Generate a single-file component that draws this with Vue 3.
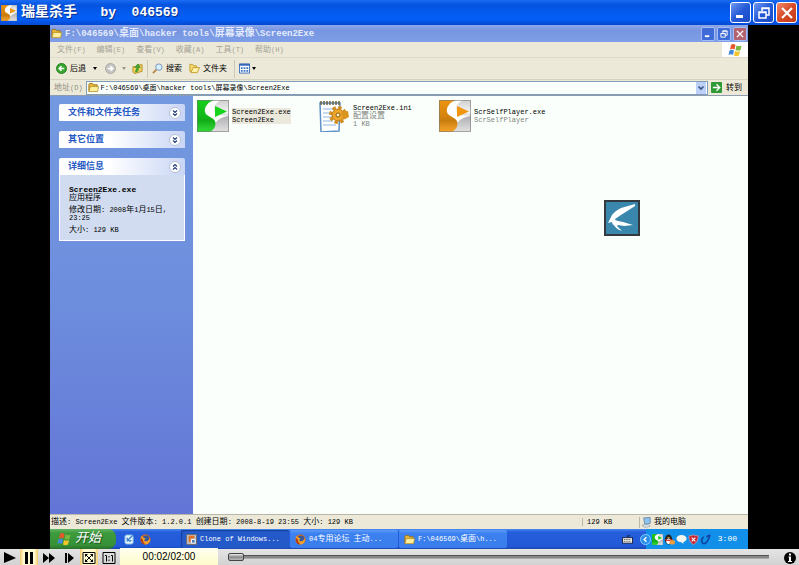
<script setup>
    import { ref, h } from 'vue';

    // latin and chinese runs get their own size, see .mix below
    const Mix = (props) => h('span', { class: 'mix' },
        props.t.split(/([\x20-\x7e]+)/).filter((s) => s !== '').map((s) =>
            /^[\x20-\x7e]/.test(s) ? h('span', { class: 'latin' }, s) : s
        )
    );
    Mix.props = ['t'];

    const path = ref('F:\\046569\\桌面\\hacker tools\\屏幕录像\\Screen2Exe');
    const position = ref(0);

    const menus = ['文件(F)', '编辑(E)', '查看(V)', '收藏(A)', '工具(T)', '帮助(H)'];

    const panels = ref([
        { title: '文件和文件夹任务', open: false },
        { title: '其它位置', open: false },
        { title: '详细信息', open: true },
    ]);

    const files = [
        { name: 'Screen2Exe.exe', lines: ['Screen2Exe'], icon: 'logo', tone: 'green', selected: true },
        { name: 'Screen2Exe.ini', lines: ['配置设置', '1 KB'], icon: 'ini', tone: '' },
        { name: 'ScrSelfPlayer.exe', lines: ['ScrSelfPlayer'], icon: 'logo', tone: 'orange' },
    ];

    const tasks = [
        { title: 'Clone of Windows...', icon: 'vm', active: true },
        { title: '04专用论坛 主动...', icon: 'fox' },
        { title: 'F:\\046569\\桌面\\h...', icon: 'folder' },
    ];
</script>

<template>
    <svg class="defs" aria-hidden="true">
        <defs>
            <linearGradient id="silver" x1="0" y1="0" x2="0" y2="1">
                <stop offset="0" stop-color="#cfcfcf" /><stop offset=".4" stop-color="#f6f6f6" />
                <stop offset=".55" stop-color="#b4b4b8" /><stop offset="1" stop-color="#e2e2e2" />
            </linearGradient>
            <linearGradient id="shade" x1="0" y1="0" x2="0" y2="1">
                <stop offset="0" stop-color="#000" stop-opacity=".02" /><stop offset=".5" stop-color="#000" stop-opacity=".12" />
                <stop offset=".65" stop-color="#000" stop-opacity=".18" /><stop offset="1" stop-color="#fff" stop-opacity=".1" />
            </linearGradient>
        </defs>
        <symbol id="logo" viewBox="0 0 32 32">
            <rect width="32" height="32" fill="url(#silver)" />
            <path d="M15 0H24C18 3 16 8 17 12C18 15 24 16 32 15C25 18 20 19 18 24L5 14C5 6 9 2 15 0Z" fill="#fff" />
            <path d="M0 0H17C11 2 7 7 8 12C9 17 18 17 18.500 23Q18.500 29 13 32H0Z" fill="currentColor" />
            <path d="M0 0H17C11 2 7 7 8 12C9 17 18 17 18.500 23Q18.500 29 13 32H0Z" fill="url(#shade)" />
            <path d="M18 6L30 11.500L18 17Z" fill="currentColor" />
            <path d="M.5 .5H31.500V31.500H.5Z" fill="none" stroke="#777" stroke-opacity=".6" />
        </symbol>
        <symbol id="ini" viewBox="0 0 32 32">
            <path d="M2 3H22L21 31L3 32Z" fill="#fff" stroke="#5e91c7" stroke-width="1.500" />
            <path d="M5 9H18M5 13H17M5 17H14M5 21H15M5 25H18" stroke="#8eb4de" />
            <path d="M3 1V5M6 1V5M9 1V5M12 1V5M15 1V5M18 1V5M21 1V5" stroke="#6f6240" stroke-width="1.500" />
            <circle cx="20" cy="15" r="6" fill="#eda52a" stroke="#b87411" />
            <circle cx="20" cy="15" r="7.500" fill="none" stroke="#d18e20" stroke-width="3" stroke-dasharray="3.500 2.390" />
            <path d="M23 12L30 11L31 17L25 20Z" fill="#d9951f" />
            <circle cx="20" cy="15" r="2" fill="#fff1c4" stroke="#8f5a10" />
        </symbol>
        <symbol id="folder" viewBox="0 0 12 12">
            <path d="M1 2.500L2 1.500H5L6 3H10V10H1Z" fill="#e5b73b" stroke="#9c7417" />
            <path d="M1 10.500L2.500 5H11.500L10.500 10.500Z" fill="#fff0a0" stroke="#b48a21" stroke-width=".8" />
        </symbol>
        <symbol id="fox" viewBox="0 0 12 12">
            <circle cx="6" cy="6" r="5.500" fill="#e06a12" />
            <circle cx="6.500" cy="5" r="3.500" fill="#35579c" />
            <path d="M1 2Q2 4 4 4L6 5Q4 6 5 8Q8 9 11 5Q11 11 6 11.500Q0 11 1 2Z" fill="#f6a32b" />
            <path d="M1 4Q0 11 6 11.500Q3 9 3 6Z" fill="#b43a10" />
        </symbol>
        <symbol id="vm" viewBox="0 0 12 12">
            <rect x=".5" y=".5" width="11" height="11" rx="1" fill="#b9bec6" stroke="#75685e" />
            <path d="M3 2H9V5H5V9H3Z" fill="#e8711d" />
            <path d="M6 6H10V10H6Z" fill="#4d7cb3" stroke="#fff" />
        </symbol>
        <symbol id="flag" viewBox="0 0 14 14">
            <path d="M3 2Q5 0 7.500 2L6.500 6.500Q4 5 2 6.500Z" fill="#e8572a" />
            <path d="M8.500 2.500Q11 4 13.500 2.500L12.500 7Q10 8 7.500 7Z" fill="#79b83d" />
            <path d="M1.500 7.500Q4 6 6 7.500L5 12Q3 10.500 .5 12Z" fill="#4488dc" />
            <path d="M7 8Q9.500 9.500 12 8L11 12.500Q8 14 6 12.500Z" fill="#f5c52b" />
        </symbol>
        <symbol id="min" viewBox="0 0 16 16"><path d="M3 10H10V13H3Z" fill="currentColor" /></symbol>
        <symbol id="restore" viewBox="0 0 16 16">
            <path d="M6 6V3H13V10H10M6 3.500H13M3 7H10V13H3ZM3 7.500H10" fill="none" stroke="currentColor" stroke-width="1.500" />
        </symbol>
        <symbol id="close" viewBox="0 0 16 16">
            <path d="M3 3L13 13M13 3L3 13" stroke="currentColor" stroke-width="2.200" />
        </symbol>
    </svg>

    <div class="player">
        <header class="top">
            <svg class="top-logo orange"><use href="#logo" /></svg>
            <h1><Mix t="瑞星杀手" /><Mix t="   by  046569" /></h1>
            <div class="winbtns big">
                <button aria-label="最小化"><svg><use href="#min" /></svg></button>
                <button aria-label="还原"><svg><use href="#restore" /></svg></button>
                <button class="red" aria-label="关闭"><svg><use href="#close" /></svg></button>
            </div>
        </header>

        <main class="stage">
            <div class="screen">
                <div class="wintitle">
                    <svg class="i12"><use href="#folder" /></svg>
                    <Mix :t="path" />
                    <div class="winbtns small">
                        <button aria-label="最小化"><svg><use href="#min" /></svg></button>
                        <button aria-label="还原"><svg><use href="#restore" /></svg></button>
                        <button class="red" aria-label="关闭"><svg><use href="#close" /></svg></button>
                    </div>
                </div>

                <nav class="menu">
                    <button v-for="m in menus" :key="m"><Mix :t="m" /></button>
                    <div class="flagbox"><svg><use href="#flag" /></svg></div>
                </nav>

                <div class="tools">
                    <button class="back">
                        <svg class="i12" viewBox="0 0 12 12"><circle cx="6" cy="6" r="5.500" fill="#37a62f" stroke="#247b20" /><path d="M9 6H4M6 3.500L3.500 6L6 8.500" fill="none" stroke="#fff" stroke-width="1.700" /></svg>
                        后退
                    </button>
                    <button class="drop" aria-label="后退列表"><svg class="tri" viewBox="0 0 4 3"><path d="M0 0H4L2 3Z" /></svg></button>
                    <button aria-label="前进">
                        <svg class="i12" viewBox="0 0 12 12"><circle cx="6" cy="6" r="5.500" fill="#c4c4c0" stroke="#a6a6a2" /><path d="M3 6H8M6 3.500L8.500 6L6 8.500" fill="none" stroke="#fff" stroke-width="1.700" /></svg>
                    </button>
                    <button class="drop pale" aria-label="前进列表"><svg class="tri" viewBox="0 0 4 3"><path d="M0 0H4L2 3Z" /></svg></button>
                    <button aria-label="向上">
                        <svg class="i12" viewBox="0 0 12 12"><path d="M1 4H5L6 2H11V9L3 11.500L1 10Z" fill="#f3d564" stroke="#b08a20" /><path d="M4 10Q8 9 6.500 5H9L6.500 1L3 5H5Q6 7 4 8Z" fill="#3fae33" stroke="#23781b" stroke-width=".6" /></svg>
                    </button>
                    <i class="sep"></i>
                    <button>
                        <svg class="i12" viewBox="0 0 12 12"><path d="M1 11L5 7" stroke="#b98a4e" stroke-width="2" /><circle cx="7.500" cy="4.500" r="3.500" fill="#d7efff" stroke="#7292b8" /></svg>
                        搜索
                    </button>
                    <button class="folders">
                        <svg class="i12" viewBox="0 0 12 12"><path d="M1 1.500H4L5 3H8V9H1Z" fill="#f6dc70" stroke="#c29a2b" /><path d="M2 10.500L4.500 5H11.500L9 10.500Z" fill="#fff2a6" stroke="#c29a2b" /></svg>
                        文件夹
                    </button>
                    <i class="sep"></i>
                    <button class="views" aria-label="查看">
                        <svg class="i12" viewBox="0 0 12 12"><path d="M.5 1H11.500V11H.5Z" fill="#fff" stroke="#3568b8" /><path d="M0 2H12" stroke="#3568b8" stroke-width="2" /><path d="M2 5.500H10M2 8.500H10" stroke="#3d73c4" stroke-width="2" stroke-dasharray="2 1" /></svg>
                        <svg class="tri" viewBox="0 0 4 3"><path d="M0 0H4L2 3Z" /></svg>
                    </button>
                </div>

                <div class="address">
                    <label for="addr"><Mix t="地址(D)" /></label>
                    <div class="field">
                        <svg class="i12"><use href="#folder" /></svg>
                        <input id="addr" type="text" v-model="path" spellcheck="false">
                        <button aria-label="展开"><svg viewBox="0 0 8 8"><path d="M1.500 2.500L4 5L6.500 2.500" fill="none" stroke="#3b5789" stroke-width="1.700" /></svg></button>
                    </div>
                    <button class="go">
                        <svg class="i12" viewBox="0 0 12 12"><rect width="12" height="12" rx="1" fill="#2f9a35" /><path d="M2 6H9M6 2.500L9.500 6L6 9.500" fill="none" stroke="#fff" stroke-width="1.500" /></svg>
                        转到
                    </button>
                </div>

                <div class="body">
                    <aside>
                        <section v-for="p in panels" :key="p.title">
                            <button class="head" :aria-expanded="p.open" @click="p.open = !p.open">
                                {{ p.title }}
                                <svg viewBox="0 0 12 12">
                                    <circle cx="6" cy="6" r="5.500" fill="#fff" stroke="#b5bdd3" />
                                    <path :d="p.open ? 'M4 5.500L6 3.500L8 5.500M4 8.500L6 6.500L8 8.500' : 'M4 3.500L6 5.500L8 3.500M4 6.500L6 8.500L8 6.500'" fill="none" stroke="#26407d" stroke-width="1.200" />
                                </svg>
                            </button>
                            <div v-if="p.open" class="details">
                                <strong>Screen2Exe.exe</strong>
                                <p>应用程序</p>
                                <p class="gap"><Mix t="修改日期: 2008年1月15日," /></p>
                                <p><Mix t="23:25" /></p>
                                <p class="gap"><Mix t="大小: 129 KB" /></p>
                            </div>
                        </section>
                    </aside>

                    <div class="files">
                        <div v-for="f in files" :key="f.name" class="file" :class="{ selected: f.selected }">
                            <svg :class="f.tone"><use :href="'#' + f.icon" /></svg>
                            <div class="label">
                                <p class="name"><Mix :t="f.name" /></p>
                                <p v-for="l in f.lines" :key="l"><Mix :t="l" /></p>
                            </div>
                        </div>
                        <svg class="pet" viewBox="0 0 36 36">
                            <rect x="1" y="1" width="34" height="34" fill="#3987ad" stroke="#35383d" stroke-width="2" />
                            <path d="M31 4L17 8Q9 12 7 17L4 23L8 22L9 25L12 22L11 19L17 15L31 6Z" fill="#fff" />
                            <path d="M8 22Q11 19 14 21L19 22L29 25L20 26L14 25L13 26L18 31Q11 29 8 22Z" fill="#fff" />
                        </svg>
                    </div>
                </div>

                <div class="status">
                    <Mix class="desc" t="描述: Screen2Exe 文件版本: 1.2.0.1 创建日期: 2008-8-19 23:55 大小: 129 KB" />
                    <Mix class="size" t="129 KB" />
                    <span class="place">
                        <svg class="i12" viewBox="0 0 12 12"><path d="M3 1L10 .5V7L4 8Z" fill="#88c5f5" stroke="#7688a0" /><path d="M1 9L8 8L10 10L4 11.500Z" fill="#dfe3e6" stroke="#8e98a5" stroke-width=".7" /></svg>
                        我的电脑
                    </span>
                </div>

                <div class="taskbar">
                    <button class="start"><svg><use href="#flag" /></svg>开始</button>
                    <div class="quick">
                        <svg class="i12" viewBox="0 0 12 12"><rect x="1" y="1" width="9" height="10" rx="2" fill="#e6f3fb" stroke="#76b4e5" /><path d="M3 8L9 2M3 4Q5 9 8 7" fill="none" stroke="#3982c7" stroke-width="1.500" /></svg>
                        <svg class="i12"><use href="#fox" /></svg>
                    </div>
                    <button v-for="t in tasks" :key="t.title" class="task" :class="{ active: t.active }">
                        <svg class="i12"><use :href="'#' + t.icon" /></svg>
                        <Mix :t="t.title" />
                    </button>
                    <svg class="i12 kbd" viewBox="0 0 12 12"><path d="M6 4V2H9" fill="none" stroke="#101b3b" /><rect x=".5" y="4" width="11" height="6" fill="#f1eee2" stroke="#182344" /><path d="M2 6H10M2 8H10" stroke="#333" stroke-dasharray="1 1" /></svg>
                    <div class="tray">
                        <button aria-label="隐藏图标"><svg class="i12" viewBox="0 0 12 12"><circle cx="6" cy="6" r="5.500" fill="#2a8eea" stroke="#8fd2fb" /><path d="M7 3.500L4.500 6L7 8.500" fill="none" stroke="#fff" stroke-width="1.500" /></svg></button>
                        <svg class="i12 green"><use href="#logo" /></svg>
                        <svg class="i12" viewBox="0 0 12 12"><ellipse cx="5" cy="6" rx="4" ry="5.500" fill="#222" /><ellipse cx="5" cy="8" rx="2.500" ry="3" fill="#fff" /><path d="M1 6Q5 8 9 6" stroke="#d92020" stroke-width="1.500" fill="none" /><path d="M3 3.500H7L5 5Z" fill="#f4b032" /><ellipse cx="9" cy="9" rx="3" ry="2.500" fill="#f39b39" /></svg>
                        <svg class="i12" viewBox="0 0 12 12"><ellipse cx="6" cy="5" rx="5.500" ry="4" fill="#f6f6ee" /><path d="M5 8L8 11V7Z" fill="#f6f6ee" /></svg>
                        <svg class="i12" viewBox="0 0 12 12"><path d="M6 1Q8 2 11 2Q11 9 6 11.500Q1 9 1 2Q4 2 6 1Z" fill="#c7222f" stroke="#eca1a5" stroke-width=".7" /><path d="M4 4L8 8M8 4L4 8" stroke="#fff" stroke-width="1.300" /></svg>
                        <svg class="i12" viewBox="0 0 12 12"><path d="M4 3Q0 7 3 10Q6 12 9 6L11 1M7 3L11 1" fill="none" stroke="#10409e" stroke-width="1.700" /></svg>
                        <time>3:00</time>
                    </div>
                </div>
            </div>
        </main>

        <footer class="controls">
            <button aria-label="播放"><svg viewBox="0 0 18 16"><path d="M4 3L16 9L4 14Z" /></svg></button>
            <button class="on" aria-label="暂停"><svg viewBox="0 0 18 16"><path d="M5 3H8V15H5ZM10 3H13V15H10Z" /></svg></button>
            <button aria-label="快进"><svg viewBox="0 0 18 16"><path d="M3 4L9 9L3 14ZM9 4L15 9L9 14Z" /></svg></button>
            <button aria-label="单步"><svg viewBox="0 0 18 16"><path d="M5 4H7V14H5ZM8 4L14 9L8 14Z" /></svg></button>
            <button class="on" aria-label="适合窗口"><svg viewBox="0 0 18 16"><path d="M3 3.500H15V14.500H3Z" fill="none" stroke="#000" /><path d="M5 5H8L5 8ZM13 5V8L10 5ZM5 13V10L8 13ZM13 13H10L13 10Z" /><path d="M6 6L12 12M12 6L6 12" stroke="#000" /></svg></button>
            <button aria-label="原始大小"><svg viewBox="0 0 18 16"><path d="M3 3.500H15V14.500H3ZM5 6.500H6.500V12.500M11 6.500H12.500V12.500M9 7V8.500M9 10.500V12" fill="none" stroke="#000" /></svg></button>
            <output>00:02/02:00</output>
            <input type="range" min="0" max="120" v-model="position" aria-label="播放进度">
            <button class="info" aria-label="信息"><svg viewBox="0 0 18 16"><circle cx="9" cy="9" r="6" /><path d="M8 4.500H10V6.500H8ZM7.500 7.500H10V12H11V13H7V12H8V8.500H7.500Z" fill="#fff" /></svg></button>
        </footer>
    </div>
</template>

<style>
    body
    {
        margin: 0;
        background-color: #000;
    }
    .mix
    {
        white-space: pre-wrap;
    }
    .mix .latin
    {
        font-size: var(--latin, 7px);
    }
</style>

<style scoped>
    .defs
    {
        position: absolute;
        width: 0;
        height: 0;
    }
    .player
    {
        display: flex;
        flex-direction: column;
        min-height: 100vh;
        font: 8px/8px "Liberation Mono", "Noto Sans CJK SC", monospace;
        color: #000;
    }
    svg
    {
        display: block;
        flex: none;
    }
    p, h1
    {
        margin: 0;
    }
    button
    {
        display: flex;
        align-items: center;
        padding: 0;
        border: 0;
        background: none;
        font: inherit;
        color: inherit;
    }
    .i12
    {
        width: 11px;
        height: 11px;
    }
    .green { color: #16d31c; }
    .orange { color: #f2960f; }

    /* outer title bar */
    .top
    {
        display: flex;
        align-items: center;
        height: 25px;
        padding: 0 2px 0 1px;
        background: linear-gradient(#1b6bf2, #0453e0 20%, #0560f8 75%, #0448d0);
        color: #fff;
    }
    .top-logo
    {
        width: 16px;
        height: 16px;
    }
    .top h1
    {
        --latin: 13px;
        flex: 1;
        padding-left: 4px;
        font-size: 14px;
        line-height: 20px;
        text-shadow: 1px 1px 0 #0a318c;
    }
    .winbtns
    {
        display: flex;
        gap: 2px;
    }
    .winbtns button
    {
        justify-content: center;
        box-sizing: border-box;
        border: 1px solid #fff;
        border-radius: 3px;
        background: linear-gradient(135deg, #6f98f0, #2459d8 50%, #1a4cc4);
        color: #fff;
    }
    .winbtns .red
    {
        background: linear-gradient(135deg, #ef8b70, #d84a25 50%, #c23b18);
    }
    .big button
    {
        width: 21px;
        height: 21px;
    }
    .big svg
    {
        width: 16px;
        height: 16px;
    }
    .small
    {
        margin-left: auto;
    }
    .small button
    {
        width: 14px;
        height: 14px;
        border-color: #a5bdf2;
        border-radius: 2px;
        background: #3f6bd8;
    }
    .small .red
    {
        background: #b3626f;
    }
    .small svg
    {
        width: 10px;
        height: 10px;
    }

    .stage
    {
        display: flex;
        flex: 1;
        padding: 0 51px 0 50px;
        background-color: #000;
    }
    .screen
    {
        display: flex;
        flex: 1;
        flex-direction: column;
        min-width: 0;
        background-color: #ece9d8;
    }
    .wintitle
    {
        --latin: 9px;
        display: flex;
        align-items: center;
        gap: 3px;
        height: 17px;
        padding: 0 1px;
        background: linear-gradient(#8fa9ea, #7795e0 30%, #7f9fe8);
        color: #e3ebfc;
        font-size: 10px;
        font-weight: bold;
    }
    .menu
    {
        display: flex;
        gap: 11px;
        height: 16px;
        padding-left: 7px;
        color: #a5a396;
        border-bottom: 1px solid #dfdccb;
        box-sizing: border-box;
    }
    .flagbox
    {
        display: flex;
        align-items: center;
        justify-content: center;
        width: 26px;
        margin-left: auto;
        background-color: #fff;
    }
    .flagbox svg
    {
        width: 14px;
        height: 14px;
    }
    .tools
    {
        display: flex;
        align-items: center;
        height: 22px;
        padding-left: 6px;
        box-sizing: border-box;
        border-bottom: 1px solid #d5d2c0;
    }
    .tools button
    {
        gap: 3px;
    }
    .tools .drop
    {
        padding: 0 8px 0 7px;
    }
    .tools .pale
    {
        padding: 0 6px;
        opacity: .35;
    }
    .tri
    {
        width: 4px;
        height: 3px;
    }
    .sep
    {
        width: 1px;
        height: 18px;
        margin: 0 4px;
        background-color: #cbc8b8;
    }
    .tools .folders
    {
        margin: 0 3px 0 7px;
    }
    .tools .views
    {
        gap: 2px;
    }
    .address
    {
        display: flex;
        align-items: center;
        height: 16px;
        padding: 0 6px 0 4px;
        box-sizing: border-box;
        border-bottom: 1px solid #8d9cae;
    }
    .address label
    {
        color: #8f8d82;
    }
    .field
    {
        display: flex;
        flex: 1;
        align-items: center;
        gap: 2px;
        height: 14px;
        margin: 0 3px;
        padding: 0 1px;
        box-sizing: border-box;
        border: 1px solid #7f9db9;
        background-color: #fafffc;
    }
    .field input
    {
        flex: 1;
        min-width: 0;
        padding: 0;
        border: 0;
        outline: 0;
        background: none;
        color: #000;
        font: 7px/10px "Liberation Mono", "Noto Sans CJK SC", monospace;
    }
    .field button
    {
        justify-content: center;
        width: 10px;
        height: 12px;
        background-color: #bdd0f8;
    }
    .field button svg
    {
        width: 8px;
        height: 8px;
    }
    .go
    {
        gap: 4px;
    }

    .body
    {
        display: flex;
        flex: 1;
    }
    aside
    {
        display: flex;
        flex-direction: column;
        gap: 10px;
        width: 143px;
        padding: 8px 8px 8px 9px;
        box-sizing: border-box;
        background: linear-gradient(#739ae0, #6d8ddd 50%, #6375d6);
    }
    .head
    {
        justify-content: space-between;
        width: 100%;
        height: 17px;
        padding: 0 4px 0 9px;
        border-radius: 2px 2px 0 0;
        background: linear-gradient(90deg, #fff 40%, #c8d5f5);
        color: #2458c4;
        font-size: 9px;
        font-weight: bold;
    }
    .head svg
    {
        width: 12px;
        height: 12px;
    }
    .details
    {
        padding: 11px 9px 6px;
        border: 1px solid #fff;
        border-top: 0;
        background-color: #d1dcf0;
    }
    .details strong
    {
        display: block;
    }
    .details .gap
    {
        margin-top: 4px;
    }
    .files
    {
        position: relative;
        display: grid;
        flex: 1;
        grid-template-columns: repeat(auto-fill, 121px);
        align-content: start;
        padding: 4px;
        background-color: #fafffb;
    }
    .file
    {
        display: flex;
        align-items: center;
        gap: 3px;
        white-space: nowrap;
        color: #83857f;
    }
    .file > svg
    {
        width: 32px;
        height: 32px;
    }
    .file .name, .selected
    {
        color: #000;
    }
    .selected .label
    {
        background-color: #ebe9dc;
    }
    .pet
    {
        position: absolute;
        top: 104px;
        right: 108px;
        width: 36px;
        height: 36px;
    }

    .status
    {
        display: flex;
        align-items: center;
        height: 15px;
        padding-left: 1px;
        box-sizing: border-box;
        border-top: 1px solid #b9b7a8;
    }
    .desc
    {
        flex: 1;
    }
    .size
    {
        width: 52px;
        padding-left: 4px;
        border-left: 1px solid #bab7a5;
    }
    .place
    {
        display: flex;
        align-items: center;
        gap: 2px;
        width: 107px;
        padding-left: 1px;
        border-left: 1px solid #bab7a5;
    }

    .taskbar
    {
        display: flex;
        align-items: center;
        gap: 1px;
        height: 20px;
        background: linear-gradient(#4a8af0, #245edb 15%, #2259d8 85%, #1b47b0);
        color: #fff;
    }
    .start
    {
        gap: 4px;
        width: 66px;
        height: 20px;
        padding-left: 7px;
        box-sizing: border-box;
        border-radius: 0 8px 8px 0;
        background: linear-gradient(#63b563, #3c9a3c 20%, #379137 80%, #2a6f2c);
        font-size: 13px;
        line-height: 20px;
        font-style: italic;
        text-shadow: 1px 1px 1px #1d4d1d;
    }
    .start svg
    {
        width: 14px;
        height: 14px;
    }
    .quick
    {
        display: flex;
        gap: 5px;
        width: 56px;
        padding-left: 7px;
    }
    .task
    {
        gap: 3px;
        width: 108px;
        height: 18px;
        padding-left: 5px;
        box-sizing: border-box;
        border-radius: 2px;
        background: linear-gradient(#5c9bf8, #3c81f0 20%, #3a7cec);
    }
    .task.active
    {
        background: #2459c9;
        box-shadow: inset 1px 1px 1px #173d96;
    }
    .kbd
    {
        margin-left: auto;
        margin-right: 6px;
    }
    .tray
    {
        display: flex;
        align-items: center;
        gap: 1px;
        height: 20px;
        padding-right: 11px;
        background: linear-gradient(90deg, transparent 6px, #1290e9 6px);
    }
    .tray time
    {
        padding-left: 6px;
    }

    /* playback bar */
    .controls
    {
        display: flex;
        align-items: center;
        gap: 2px;
        height: 16px;
        background: linear-gradient(#e4e4e4, #d2d2d2);
    }
    .controls button svg
    {
        width: 18px;
        height: 16px;
    }
    .controls .on
    {
        background: linear-gradient(90deg, #f5c96b, #fffbd0 20%, #fffbd0 80%, #f5c96b);
    }
    .controls output
    {
        width: 98px;
        background: linear-gradient(#fffff0, #fdfbc8);
        font: 10px/18px "Liberation Sans", sans-serif;
        text-align: center;
    }
    .controls input
    {
        flex: 1;
        min-width: 0;
        height: 16px;
        margin: 0 10px 0 8px;
        appearance: none;
        background: none;
    }
    .controls input::-webkit-slider-runnable-track
    {
        height: 4px;
        border-top: 1px solid #555;
        border-bottom: 1px solid #aaa;
        box-sizing: border-box;
        background-color: #888;
    }
    .controls input::-webkit-slider-thumb
    {
        appearance: none;
        width: 16px;
        height: 8px;
        margin-top: -3px;
        border: 1px solid #444;
        border-radius: 2px;
        box-sizing: border-box;
        background: linear-gradient(#eee, #888 50%, #bbb);
    }
</style>
